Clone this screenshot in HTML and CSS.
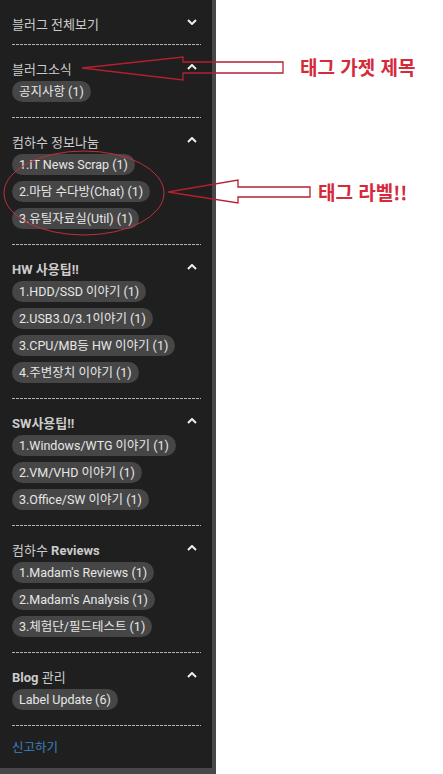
FILE: index.html
```html
<!DOCTYPE html>
<html lang="ko">
<head>
    <meta charset="UTF-8">
    <meta name="viewport" content="width=device-width, initial-scale=1.0">
    <title>Labels</title>
    <link rel="stylesheet" href="styles.css">
</head>
<body>
    <div class="sidebar">
        <div class="section collapsed">
            <div class="section-title">
                <span>블러그 전체보기</span>
                <svg class="chevron" width="10" height="6" viewBox="0 0 10 6"><polyline points="1,1 5,5 9,1"/></svg>
            </div>
        </div>

        <div class="section">
            <div class="section-title">
                <span>블러그소식</span>
                <svg class="chevron" width="10" height="6" viewBox="0 0 10 6"><polyline points="1,5 5,1 9,5"/></svg>
            </div>
            <div class="labels">
                <a class="label">공지사항 (1)</a>
            </div>
        </div>

        <div class="section">
            <div class="section-title">
                <span>컴하수 정보나눔</span>
                <svg class="chevron" width="10" height="6" viewBox="0 0 10 6"><polyline points="1,5 5,1 9,5"/></svg>
            </div>
            <div class="labels">
                <a class="label">1.IT News Scrap (1)</a>
                <a class="label">2.마담 수다방(Chat) (1)</a>
                <a class="label">3.유틸자료실(Util) (1)</a>
            </div>
        </div>

        <div class="section">
            <div class="section-title bold">
                <span>HW 사용팁!!</span>
                <svg class="chevron" width="10" height="6" viewBox="0 0 10 6"><polyline points="1,5 5,1 9,5"/></svg>
            </div>
            <div class="labels">
                <a class="label">1.HDD/SSD 이야기 (1)</a>
                <a class="label">2.USB3.0/3.1이야기 (1)</a>
                <a class="label">3.CPU/MB등 HW 이야기 (1)</a>
                <a class="label">4.주변장치 이야기 (1)</a>
            </div>
        </div>

        <div class="section">
            <div class="section-title bold">
                <span>SW사용팁!!</span>
                <svg class="chevron" width="10" height="6" viewBox="0 0 10 6"><polyline points="1,5 5,1 9,5"/></svg>
            </div>
            <div class="labels">
                <a class="label">1.Windows/WTG 이야기 (1)</a>
                <a class="label">2.VM/VHD 이야기 (1)</a>
                <a class="label">3.Office/SW 이야기 (1)</a>
            </div>
        </div>

        <div class="section">
            <div class="section-title">
                <span>컴하수 <b>Reviews</b></span>
                <svg class="chevron" width="10" height="6" viewBox="0 0 10 6"><polyline points="1,5 5,1 9,5"/></svg>
            </div>
            <div class="labels">
                <a class="label">1.Madam's Reviews (1)</a>
                <a class="label">2.Madam's Analysis (1)</a>
                <a class="label">3.체험단/필드테스트 (1)</a>
            </div>
        </div>

        <div class="section">
            <div class="section-title">
                <span><b>Blog</b> 관리</span>
                <svg class="chevron" width="10" height="6" viewBox="0 0 10 6"><polyline points="1,5 5,1 9,5"/></svg>
            </div>
            <div class="labels">
                <a class="label">Label Update (6)</a>
            </div>
        </div>

        <a class="report" href="#">신고하기</a>
    </div>

    <!-- red notes drawn over the screenshot -->
    <svg class="notes" width="443" height="774" viewBox="0 0 443 774">
        <polygon points="82,68 183,57 183,62 283,62 283,73 183,73 183,80"/>
        <text x="300" y="75">태그 가젯 제목</text>
        <ellipse cx="84" cy="193" rx="80" ry="42"/>
        <polygon points="168,192 238,180 238,187 310,187 310,197 238,197 238,203"/>
        <text x="318" y="200">태그 라벨!!</text>
    </svg>
</body>
</html>
```

FILE: styles.css
```css
* {
    margin: 0;
    padding: 0;
    box-sizing: border-box;
}

body {
    font-family: Roboto, "Noto Sans CJK KR", sans-serif;
    background: #fff;
    position: relative;
}

.sidebar {
    width: 216px;
    height: 774px;
    background: #1f1f1f;
    border-right: 4px solid #484848;
    border-bottom: 6px solid #484848;
    padding: 0 11px 0 12px;
}

.section {
    padding: 13px 0 16px;
    background-image: repeating-linear-gradient(90deg, #b4b4b4 0 3px, transparent 3px 4px);
    background-size: 100% 1px;
    background-repeat: no-repeat;
    background-position: bottom left;
}

.section.collapsed {
    padding-bottom: 12px;
}

.section-title {
    display: flex;
    justify-content: space-between;
    align-items: center;
    height: 20px;
    margin-bottom: 3px;
    font-size: 13px;
    color: #cccccc;
}

.section.collapsed .section-title {
    margin-bottom: 0;
}

.section-title.bold,
.section-title b {
    font-weight: 700;
}

.chevron {
    margin-right: 4px;
    margin-top: -2px;
    fill: none;
    stroke: #eeeeee;
    stroke-width: 2;
}

.labels {
    display: flex;
    flex-direction: column;
    align-items: flex-start;
    gap: 6px;
}

.label {
    display: inline-block;
    height: 21px;
    line-height: 21px;
    padding: 0 7px;
    border-radius: 11px;
    background: #464646;
    color: #e6e6e6;
    font-size: 12.5px;
    white-space: nowrap;
}

.report {
    display: block;
    margin-top: 12px;
    line-height: 20px;
    font-size: 12.5px;
    color: #3d80bf;
    text-decoration: none;
}

.notes {
    position: absolute;
    top: 0;
    left: 0;
    pointer-events: none;
}

.notes polygon {
    fill: none;
    stroke: #b5202f;
    stroke-width: 1.3;
}

.notes ellipse {
    fill: none;
    stroke: #c0303c;
    stroke-width: 1;
}

.notes text {
    font-family: "Noto Sans CJK KR", sans-serif;
    font-size: 19px;
    font-weight: 700;
    fill: #d42a3c;
}
```
